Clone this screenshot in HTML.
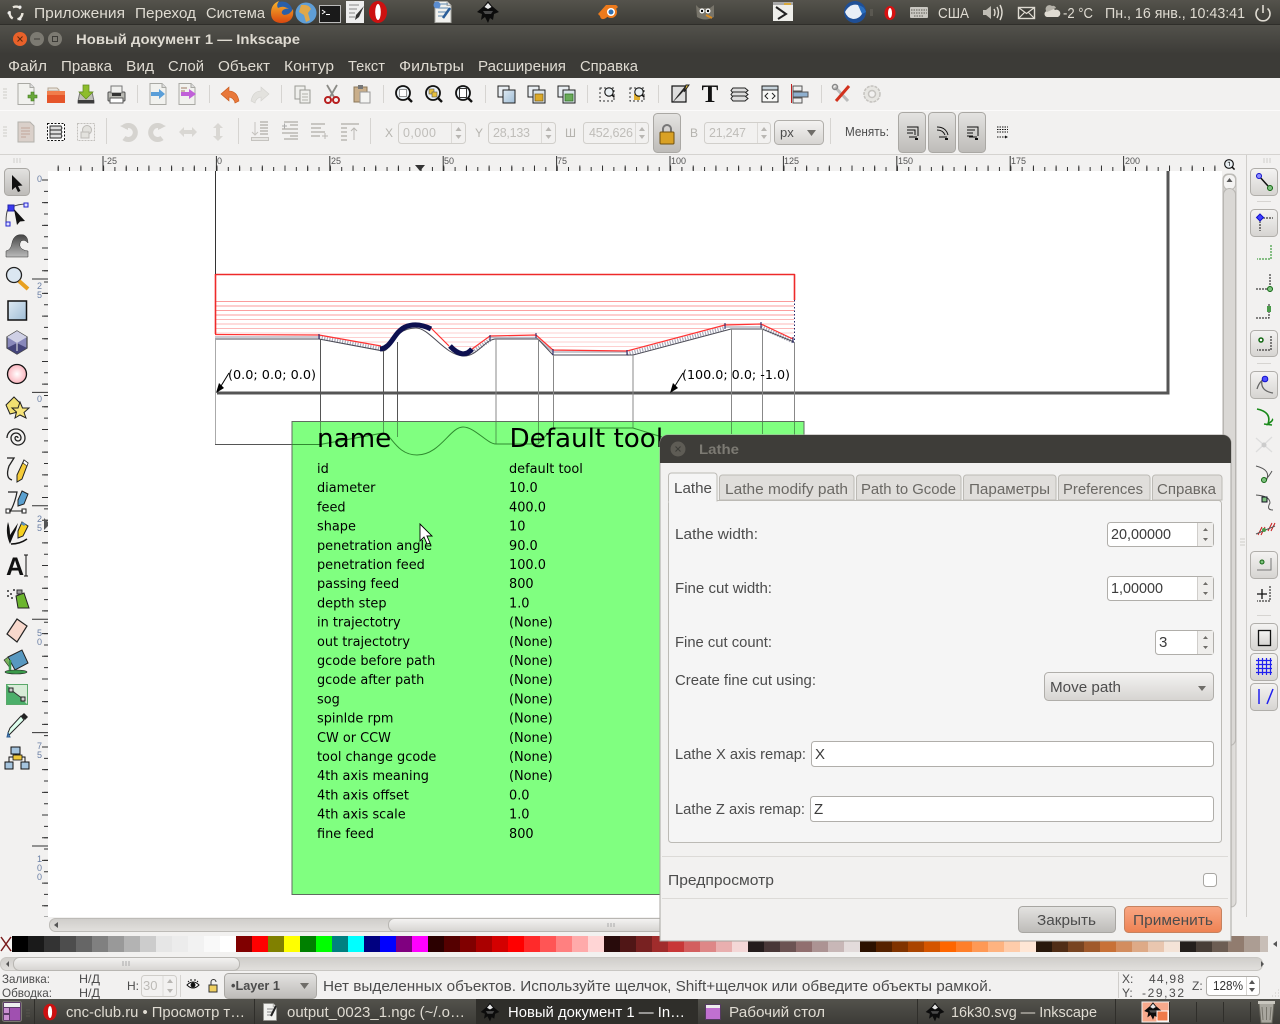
<!DOCTYPE html>
<html lang="ru"><head><meta charset="utf-8"><title>Новый документ 1 — Inkscape</title>
<style>
html,body{margin:0;padding:0;background:#f2f1f0;width:1280px;height:1024px;overflow:hidden}
svg{display:block}
.u{font-family:"Liberation Sans","DejaVu Sans",sans-serif;font-size:15px}
.p{fill:#dfdbd2}
.d{fill:#4c4c4c}
.c{font-family:"DejaVu Sans",sans-serif;font-size:12.900px;fill:#000}
.r{font-family:"Liberation Sans",sans-serif;font-size:9px;fill:#555}
.v{font-family:"Liberation Sans",sans-serif;font-size:9px;fill:#6a7fa5}
.dim{fill:#b5b3ae}
</style></head><body>
<svg width="1280" height="1024" viewBox="0 0 1280 1024" xmlns="http://www.w3.org/2000/svg">
<defs>
<linearGradient id="pan" x1="0" y1="0" x2="0" y2="1"><stop offset="0" stop-color="#55534c"/><stop offset="1" stop-color="#3d3c37"/></linearGradient>
<linearGradient id="tit" x1="0" y1="0" x2="0" y2="1"><stop offset="0" stop-color="#53524c"/><stop offset="1" stop-color="#3c3b37"/></linearGradient>
<linearGradient id="btn" x1="0" y1="0" x2="0" y2="1"><stop offset="0" stop-color="#f4f3f2"/><stop offset="1" stop-color="#d6d4d1"/></linearGradient>
<linearGradient id="btn2" x1="0" y1="0" x2="0" y2="1"><stop offset="0" stop-color="#e4e3e1"/><stop offset="1" stop-color="#bdbbb8"/></linearGradient>
<linearGradient id="org" x1="0" y1="0" x2="0" y2="1"><stop offset="0" stop-color="#f9a784"/><stop offset="1" stop-color="#ee8253"/></linearGradient>
<linearGradient id="blu" x1="0" y1="0" x2="1" y2="1"><stop offset="0" stop-color="#dfeaf3"/><stop offset="1" stop-color="#9fbdd6"/></linearGradient>
<linearGradient id="trk" x1="0" y1="0" x2="0" y2="1"><stop offset="0" stop-color="#cfcdca"/><stop offset="1" stop-color="#e2e0dd"/></linearGradient>
<linearGradient id="trv" x1="0" y1="0" x2="1" y2="0"><stop offset="0" stop-color="#cfcdca"/><stop offset="1" stop-color="#e2e0dd"/></linearGradient>
<linearGradient id="wav" x1="0" y1="0" x2="0" y2="1"><stop offset="0" stop-color="#444"/><stop offset="1" stop-color="#bbb"/></linearGradient>
<linearGradient id="fx" x1="0" y1="0" x2="0" y2="1"><stop offset="0" stop-color="#f7b52c"/><stop offset="1" stop-color="#d9480f"/></linearGradient>
<radialGradient id="pk"><stop offset="0" stop-color="#fff"/><stop offset="1" stop-color="#fbb4bd"/></radialGradient>
<g id="ink"><path d="M0-11 L4-6 L11 0 L6 2 L5 8 L2 6 L0 11 L-3 5 L-7 8 L-6 2 L-11 0 L-4-6Z" fill="#0c0c0c"/><path d="M0-9 L3.500-5 L0-3 L-3.500-5Z" fill="#e6e6e6"/><path d="M-5-1 L5-1 L3 2 L-3 2Z" fill="#4a4a4a"/></g>
<g id="opera"><ellipse cx="0" cy="0" rx="9" ry="11" fill="#cc1111"/><ellipse cx="0" cy="0" rx="2.800" ry="8" fill="#fff"/></g>
<g id="page"><path d="M-8-10.500 H4 L8-6.500 V10.500 H-8Z" fill="#f1f1ee" stroke="#a9a9a4"/><path d="M4-10.500 V-6.500 H8" fill="#ddd" stroke="#a9a9a4"/></g>
<g id="mag"><line x1="4" y1="4" x2="9" y2="9" stroke="#111" stroke-width="2.400"/><circle r="7" fill="#eaf0f4" stroke="#111" stroke-width="1.800"/></g>
</defs>

<!-- TOP PANEL -->
<rect width="1280" height="24" fill="url(#pan)"/>
<g fill="none" stroke="#e8e4da" stroke-width="2.400"><circle cx="16" cy="13" r="6.400" stroke-dasharray="8.500 4.900"/></g>
<circle cx="9" cy="13" r="1.500" fill="#eee"/><circle cx="20" cy="7" r="1.500" fill="#eee"/><circle cx="20" cy="19" r="1.500" fill="#eee"/>
<g class="u p">
<text x="34" y="18" textLength="91" lengthAdjust="spacingAndGlyphs">Приложения</text>
<text x="135" y="18" textLength="61" lengthAdjust="spacingAndGlyphs">Переход</text>
<text x="206" y="18" textLength="59" lengthAdjust="spacingAndGlyphs">Система</text>
<text x="938" y="18" textLength="31" lengthAdjust="spacingAndGlyphs">США</text>
<text x="1063" y="18" textLength="30" lengthAdjust="spacingAndGlyphs">-2 °C</text>
<text x="1105" y="18" textLength="140" lengthAdjust="spacingAndGlyphs">Пн., 16 янв., 10:43:41</text>
</g>
<!-- firefox -->
<circle cx="282" cy="12" r="10.500" fill="#2a5fa8"/><path d="M271 13 Q271 4 279 1 Q276 5 278 8 Q283 5 289 9 Q286 8 283 10 Q280 13 284 15 Q290 15 293 9 Q295 22 282 23 Q271 23 271 13Z" fill="url(#fx)"/>
<!-- globe -->
<circle cx="306" cy="13" r="10.500" fill="#5f9ed6"/><path d="M301 5 Q309 4 311 9 L308 13 L310 20 L306 22 L304 15 L299 12Z" fill="#e0a84a"/>
<!-- terminal -->
<rect x="319.500" y="5.500" width="21" height="17" fill="#1a1a1a" stroke="#bbb"/><path d="M322 10 l3 2-3 2" fill="none" stroke="#fff"/><line x1="326" y1="14.500" x2="330" y2="14.500" stroke="#fff"/>
<!-- notepad -->
<rect x="346" y="1" width="18" height="22" fill="#eee"/><path d="M349 5h10M349 9h8M349 13h6M349 17h6" stroke="#888"/><path d="M364 6 L359 17 L355 20 L356 15Z" fill="#333"/>
<use href="#opera" x="378" y="12"/>
<!-- doc -->
<use href="#page" x="443" y="12"/><path d="M438 4h10M438 8h10M438 12h9M438 16h6" stroke="#5b86ad"/><path d="M450 8l-7 10" stroke="#2b5e99" stroke-width="2.500"/><circle cx="437" cy="5" r="3.500" fill="#5b8dd0"/>
<use href="#ink" x="488" y="12"/>
<!-- blender -->
<path d="M598 14 L606 5 L616 5 Q619 7 617 8 L606 18 Q601 21 600 16Z" fill="#ec7a1c"/><circle cx="611" cy="12" r="6" fill="#ec7a1c"/><circle cx="611" cy="12" r="4" fill="#fff"/><circle cx="611" cy="12" r="2.500" fill="#2f6fb0"/>
<!-- gimp -->
<path d="M696 5 L699 8 H710 L714 5 L714 17 Q705 22 697 17Z" fill="#77746a"/><circle cx="702" cy="11" r="2.500" fill="#fff"/><circle cx="708" cy="11" r="2.500" fill="#fff"/><circle cx="702" cy="11" r="1.200"/><circle cx="708" cy="11" r="1.200"/><path d="M706 15l6 3" stroke="#d98a20" stroke-width="2"/>
<!-- file -->
<rect x="773" y="2" width="20" height="19" fill="#eeeeea"/><rect x="773" y="2" width="20" height="3" fill="#aaa"/><rect x="784" y="3" width="7" height="2" fill="#d8a83a"/><path d="M776 7 L786 14 L778 19" fill="none" stroke="#222" stroke-width="2"/>
<!-- thunderbird -->
<circle cx="855" cy="12" r="11" fill="#1f4f96"/><path d="M845 12 Q850 3 858 5 L863 12 Q860 19 853 19 Q847 18 845 12Z" fill="#e8eef6"/><path d="M858 5 Q864 6 866 12 L862 14Z" fill="#2a6fc0"/>
<rect x="870" y="9" width="3" height="7" fill="#5a5851"/>
<ellipse cx="890" cy="13" rx="5.500" ry="7" fill="#d61111"/><ellipse cx="890" cy="13" rx="2" ry="5" fill="#fff"/>
<rect x="910" y="7" width="18" height="11" rx="1" fill="#c9c7c1"/><g stroke="#5a5851" stroke-width="1" stroke-dasharray="1.500 1"><line x1="911" y1="10" x2="927" y2="10"/><line x1="911" y1="13" x2="927" y2="13"/><line x1="914" y1="16" x2="924" y2="16"/></g>
<path d="M983 10h3l5-4v13l-5-4h-3Z" fill="#bfbcb4"/><g fill="none" stroke="#dfdbd2" stroke-width="1.400"><path d="M994 9q2 3.500 0 7"/><path d="M997 7q3 5.500 0 11"/><path d="M1000 5q4 7.500 0 15"/></g>
<rect x="1018.500" y="7.500" width="16" height="11" fill="#3f3e39" stroke="#dfdbd2" stroke-width="1.400"/><path d="M1018.500 7.500l8 6 8-6M1018.500 18.500l6-6M1034.500 18.500l-6-6" fill="none" stroke="#dfdbd2" stroke-width="1.200"/>
<path d="M1047 17a3 3 0 0 1 1-6a4 4 0 0 1 7-1a3.500 3.500 0 0 1 3 7Z" fill="#dfdbd2"/><path d="M1047 12a3 3 0 0 1 5-6a3 3 0 0 1 4 2" fill="#b5b2a9"/>
<g fill="none" stroke="#dfdbd2" stroke-width="1.600"><path d="M1258.500 8.500a7 7 0 1 0 9 0"/><line x1="1263" y1="5" x2="1263" y2="13"/></g>

<!-- TITLEBAR + MENU -->
<rect y="24" width="1280" height="30" fill="url(#tit)"/>
<rect y="54" width="1280" height="24" fill="#3c3b37"/>
<line x1="0" y1="24.500" x2="1280" y2="24.500" stroke="#2f2e2a"/>
<circle cx="20" cy="39" r="7" fill="#e9612a"/><path d="M17.500 36.500l5 5m0-5l-5 5" stroke="#5a2a10"/>
<circle cx="37" cy="39" r="7" fill="#7c7a72"/><line x1="34" y1="39" x2="40" y2="39" stroke="#3c3b37"/>
<circle cx="55" cy="39" r="7" fill="#7c7a72"/><rect x="52.500" y="36.500" width="5" height="5" fill="none" stroke="#3c3b37"/>
<text x="76" y="44" class="u" style="font-weight:bold;font-size:14px" fill="#dfdbd2" textLength="224" lengthAdjust="spacingAndGlyphs">Новый документ 1 — Inkscape</text>
<g class="u p">
<text x="8" y="71" textLength="39" lengthAdjust="spacingAndGlyphs">Файл</text>
<text x="61" y="71" textLength="51" lengthAdjust="spacingAndGlyphs">Правка</text>
<text x="126" y="71" textLength="28" lengthAdjust="spacingAndGlyphs">Вид</text>
<text x="168" y="71" textLength="36" lengthAdjust="spacingAndGlyphs">Слой</text>
<text x="218" y="71" textLength="52" lengthAdjust="spacingAndGlyphs">Объект</text>
<text x="284" y="71" textLength="50" lengthAdjust="spacingAndGlyphs">Контур</text>
<text x="348" y="71" textLength="37" lengthAdjust="spacingAndGlyphs">Текст</text>
<text x="399" y="71" textLength="65" lengthAdjust="spacingAndGlyphs">Фильтры</text>
<text x="478" y="71" textLength="88" lengthAdjust="spacingAndGlyphs">Расширения</text>
<text x="580" y="71" textLength="58" lengthAdjust="spacingAndGlyphs">Справка</text>
</g>

<!-- TOOLBARS -->
<rect y="78" width="1280" height="77" fill="#f2f1f0"/>
<line x1="0" y1="110.500" x2="1280" y2="110.500" stroke="#fbfafa"/>
<line x1="0" y1="154.500" x2="1280" y2="154.500" stroke="#d5d3d0"/>
<g stroke="#cfcdc9"><path d="M3 89h4M3 92h4M3 95h4M3 98h4M3 127h4M3 130h4M3 133h4M3 136h4"/></g>
<g stroke="#d6d4d1"><path d="M137.500 85v18M209.500 85v18M281.500 85v18M383.500 85v18M485.500 85v18M587.500 85v18M658.500 85v18M821.500 85v18M106.500 118v26M238.500 118v26M370.500 118v26M830.500 118v26"/></g>
<!-- row 1 icons -->
<use href="#page" x="26" y="94"/><path d="M31 92h3v3h3v3h-3v3h-3v-3h-3v-3h3Z" fill="#6aa83a" stroke="#3f7a1e" stroke-width=".6"/>
<path d="M48 88h9l2 2v1H48Z" fill="#e9e5df" stroke="#b5a795"/><rect x="47" y="91" width="18" height="12" fill="#e5552a"/><rect x="47" y="91" width="18" height="4" fill="#f17d4b"/>
<path d="M78 101 L80 92 H92 L94 101 V103 H78Z" fill="#bfbfb8" stroke="#777"/><rect x="78" y="100" width="16" height="3.500" fill="#3c3c3c"/><path d="M83 85h6v7h4l-7 7-7-7h4Z" fill="#8ebd2c" stroke="#5f8a1b" stroke-width=".7"/>
<rect x="108" y="92" width="17" height="9" rx="1" fill="#b9b9b3" stroke="#4f4f4f"/><rect x="111" y="86" width="11" height="7" fill="#f0f0ee" stroke="#777"/><rect x="110" y="98" width="13" height="5" fill="#fff" stroke="#555"/><rect x="112" y="93" width="9" height="3" fill="#333"/>
<use href="#page" x="158" y="94"/><path d="M151 92h8v-3l6 5-6 5v-3h-8Z" fill="#5a9ed8"/>
<use href="#page" x="187" y="94"/><path d="M181 88h6M181 91h4" stroke="#c8b5a8" stroke-width="2"/><path d="M181 92h8v-3l7 5-7 5v-3h-8Z" fill="#c060d8"/>
<path d="M221 94 L229 87 V91 Q237 91 239 101 L235 103 Q234 98 229 97 V101Z" fill="#e8783a" stroke="#c55618" stroke-width=".6"/>
<path d="M269 94 L261 87 V91 Q253 91 251 101 L255 103 Q256 98 261 97 V101Z" fill="#e3e2de" stroke="#d2d1cd" stroke-width=".6"/>
<rect x="295" y="86" width="10" height="13" fill="#efefec" stroke="#9a9a95"/><rect x="300" y="90" width="10" height="13" fill="#efefec" stroke="#9a9a95"/><path d="M302 94h6M302 97h6M302 100h6" stroke="#b0b0aa"/>
<path d="M327 85l7 12M337 85l-7 12" stroke="#8b8b86" stroke-width="1.800"/><circle cx="328" cy="100" r="3" fill="none" stroke="#b81f1f" stroke-width="2"/><circle cx="336" cy="100" r="3" fill="none" stroke="#b81f1f" stroke-width="2"/>
<rect x="354" y="87" width="13" height="15" fill="#c9ae8a" stroke="#8a7658"/><rect x="358" y="85" width="5" height="4" fill="#777"/><rect x="360" y="92" width="10" height="11" fill="#f4f4f2" stroke="#999"/>
<g transform="translate(403,93)"><use href="#mag"/><rect x="-3.500" y="-3.500" width="7" height="7" fill="#fff" stroke="#333" stroke-dasharray="1 1"/></g>
<g transform="translate(433,93)"><use href="#mag"/><rect x="-4" y="-4" width="5" height="5" fill="#e8c03a" stroke="#555" stroke-width=".6"/><rect x="-1" y="-1" width="5" height="5" fill="#e8c03a" stroke="#555" stroke-width=".6"/></g>
<g transform="translate(463,93)"><use href="#mag"/><rect x="-3.500" y="-4.500" width="7" height="9" fill="#fff" stroke="#333"/></g>
<rect x="498" y="86" width="11" height="11" fill="#e9eef3" stroke="#222"/><rect x="503" y="90" width="12" height="13" fill="url(#blu)" stroke="#222"/>
<rect x="528" y="86" width="11" height="11" fill="#e9eef3" stroke="#222"/><rect x="533" y="90" width="12" height="13" fill="#d8e2ea" stroke="#222"/><rect x="535" y="94" width="8" height="7" fill="#dcaa2a" stroke="#7a5a10" stroke-width=".7"/>
<rect x="558" y="86" width="11" height="11" fill="#e9eef3" stroke="#222"/><rect x="563" y="90" width="12" height="13" fill="#d8e2ea" stroke="#222"/><rect x="565" y="94" width="8" height="7" fill="#6aaa5a" stroke="#2a6a1a" stroke-width=".7"/>
<rect x="600" y="88" width="14" height="13" fill="none" stroke="#333" stroke-dasharray="2 2"/><g transform="translate(609,92) scale(.6)"><use href="#mag"/></g>
<rect x="630" y="88" width="14" height="13" fill="none" stroke="#333" stroke-dasharray="2 2"/><rect x="634" y="94" width="6" height="6" fill="#e0b030"/><g transform="translate(639,92) scale(.6)"><use href="#mag"/></g>
<rect x="672" y="86" width="14" height="16" fill="#ddd" stroke="#111" stroke-width="1.200"/><path d="M689 85 L680 95 L672 103 L678 95 L686 85Z" fill="#222"/><path d="M689 85 L684 92 L686 85Z" fill="#e8c03a" stroke="#222"/>
<text x="710" y="102" text-anchor="middle" style="font-family:'Liberation Serif',serif;font-weight:bold;font-size:25px" fill="#111">T</text>
<g fill="#ddd" stroke="#222"><path d="M733 88h12l3 2.500-3 2.500h-12l-2-2.500Z"/><path d="M733 92h12l3 2.500-3 2.500h-12l-2-2.500Z"/><path d="M733 96h12l3 2.500-3 2.500h-12l-2-2.500Z"/></g>
<rect x="762" y="86" width="16" height="16" fill="#f8f8f6" stroke="#222"/><rect x="762" y="86" width="16" height="4" fill="#c8d4dc" stroke="#222"/><path d="M768 93l-3 3 3 3M772 93l3 3-3 3" fill="none" stroke="#222"/>
<line x1="791.500" y1="84" x2="791.500" y2="103" stroke="#c02020"/><rect x="793" y="86" width="9" height="5" fill="#eee" stroke="#555"/><rect x="793" y="92" width="15" height="5" fill="#8fb0cf" stroke="#555"/><rect x="793" y="98" width="9" height="5" fill="#eee" stroke="#555"/>
<path d="M835 87 L848 101" stroke="#bbb" stroke-width="3"/><path d="M849 86 L836 101" stroke="#d2311d" stroke-width="3"/><circle cx="835" cy="87" r="2.500" fill="none" stroke="#888" stroke-width="1.500"/>
<circle cx="872" cy="94" r="8" fill="#e7e6e2" stroke="#c5c3bf" stroke-width="1.500" stroke-dasharray="3 1"/><circle cx="872" cy="94" r="3.500" fill="#f2f1f0" stroke="#c5c3bf" stroke-width="1.500"/>

<!-- row 2 icons -->
<g opacity=".85"><path d="M18 122 H30 L34 126 V142 H18Z" fill="#d6cbc4" stroke="#a9a6a0"/><path d="M21 128h9M21 131h9M21 134h9M21 137h5" stroke="#b99a8b"/></g>
<rect x="47.500" y="123.500" width="17" height="17" fill="#fff" stroke="#111" stroke-dasharray="2 1.500"/><g fill="#ddd" stroke="#222" stroke-width=".9"><path d="M50 126h11l1 2-1 2H50Z"/><path d="M50 130h11l1 2-1 2H50Z"/><path d="M50 134h11l1 2-1 2H50Z"/></g>
<rect x="77.500" y="123.500" width="17" height="17" fill="none" stroke="#c2c0bc" stroke-dasharray="2 1"/><circle cx="87" cy="130" r="4.500" fill="#e3e2de" stroke="#bdbbb7"/><rect x="81" y="132" width="8" height="6" fill="#e3e2de" stroke="#bdbbb7"/>
<g fill="none" stroke="#d5d3cf" stroke-width="5"><path d="M124 127 A7 7 0 1 1 124 138"/><path d="M162 127 A7 7 0 1 0 162 138"/></g><path d="M120 126l8-3v7Z" fill="#d5d3cf"/><path d="M166 126l-8-3v7Z" fill="#d5d3cf"/>
<path d="M179 132l5-5v3h8v-3l5 5-5 5v-3h-8v3Z" fill="#d9d7d3"/><path d="M218 123l5 5h-3v8h3l-5 5-5-5h3v-8h-3Z" fill="#d9d7d3"/>
<g stroke="#c5c3bf"><rect x="251.500" y="137.500" width="17" height="3" fill="#e6e5e2"/><path d="M255 122v13M252 132l3 3 3-3" fill="none"/><path d="M260 122h8M260 125h8M260 128h8M260 131h8M260 134h8" stroke-width="1.600" stroke="#b9b7b3"/></g>
<g stroke="#b9b7b3" stroke-width="1.600"><path d="M284 122h14M290 125h8M282 129h16M282 133h16M290 136h8M284 139h14"/></g><path d="M282 126h5M284.500 123.500v5" stroke="#aaa"/>
<g stroke="#b9b7b3" stroke-width="1.600"><path d="M311 124h14M311 128h10M311 132h14M311 136h9"/><path d="M322 136h6M325 133v6" stroke-width="1"/></g>
<g stroke="#b9b7b3" stroke-width="1.600"><path d="M341 124h18M341 128h6M341 132h6M341 136h6M341 140h6"/><path d="M354 140v-12M351 131l3-3 3 3" fill="none" stroke-width="1"/></g>

<g style="font-family:'Liberation Sans',sans-serif;font-size:12px" fill="#b5b3ae"><text x="385" y="137">X</text><text x="475" y="137">Y</text><text x="565" y="137">Ш</text><text x="690" y="137">В</text></g>
<g fill="#f2f1f0" stroke="#d1cfcb"><rect x="398.500" y="122.500" width="67" height="21" rx="3"/><rect x="488.500" y="122.500" width="67" height="21" rx="3"/><rect x="583.500" y="122.500" width="65" height="21" rx="3"/><rect x="704.500" y="122.500" width="66" height="21" rx="3"/></g>
<path d="M451.500 123v20M541.500 123v20M635.500 123v20M757.500 123v20" stroke="#dcdad7"/>
<g fill="#b9b7b3"><path d="M458.500 127l-3 4h6ZM458.500 139l-3-4h6ZM548.500 127l-3 4h6ZM548.500 139l-3-4h6ZM642 127l-3 4h6ZM642 139l-3-4h6ZM764 127l-3 4h6ZM764 139l-3-4h6Z"/></g>
<g style="font-family:'Liberation Sans',sans-serif;font-size:12.500px" fill="#bfbdb9"><text x="403" y="137" textLength="33">0,000</text><text x="493" y="137" textLength="37">28,133</text><text x="589" y="137" textLength="44">452,626</text><text x="709" y="137" textLength="37">21,247</text></g>
<rect x="653.500" y="113.500" width="27" height="39" rx="4" fill="url(#btn2)" stroke="#aaa8a4"/>
<path d="M663 132v-3a4 4 0 0 1 8 0v3" fill="none" stroke="#777" stroke-width="2"/><rect x="660" y="132" width="14" height="12" rx="1" fill="#d9a125" stroke="#70500e"/>
<rect x="774.500" y="120.500" width="49" height="24" rx="4" fill="url(#btn)" stroke="#b0aeaa"/><text x="780" y="137" style="font-family:'Liberation Sans',sans-serif;font-size:13px" fill="#4c4c4c">px</text><path d="M807 130h9l-4.500 6Z" fill="#6f6d69"/>
<text x="845" y="136" class="u" style="font-size:12.500px" fill="#4c4c4c" textLength="44" lengthAdjust="spacingAndGlyphs">Менять:</text>
<g fill="url(#btn2)" stroke="#aaa8a4"><rect x="898.500" y="112.500" width="27" height="40" rx="4"/><rect x="928.500" y="112.500" width="27" height="40" rx="4"/><rect x="958.500" y="112.500" width="27" height="40" rx="4"/></g>
<g fill="none" stroke="#111"><path d="M907 127h11v9M907 130h8v5M907 133h6"/><path d="M909 137h8M937 127q9 0 11 8M937 130q6 0 8 5M967 127h11v9M967 130h8M967 133h6M967 136h6M969 137h8M939 137h8"/></g><path d="M915 138h3v2h-3ZM945 138h3v2h-3ZM975 138h3v2h-3Z" fill="#111"/>
<g stroke="#111" stroke-dasharray="1.500 1"><path d="M997 127h11M997 129.500h11M997 132h11M997 137h9"/></g><path d="M1005 135.500l3 1.500-3 1.500" fill="#111"/>

<!-- RULER -->
<rect y="155" width="1280" height="16" fill="#f2f1f0"/>
<rect y="171" width="48" height="760" fill="#f2f1f0"/>
<rect x="1222" y="171" width="58" height="760" fill="#f2f1f0"/>
<g stroke="#333" stroke-width="1"><path d="M48 169 H1222" stroke-width="4" stroke-dasharray="1 10.340" stroke-dashoffset="-9.700"/><path d="M48 168 H1222" stroke-width="5" stroke-dasharray="1 21.680" stroke-dashoffset="-9.700"/><path d="M48 163.500 H1222" stroke-width="15" stroke-dasharray="1 112.400" stroke-dashoffset="-54.500" /></g>
<g class="r"><text x="104" y="164">-25</text><text x="217" y="164">0</text><text x="331" y="164">25</text><text x="444" y="164">50</text><text x="557" y="164">75</text><text x="671" y="164">100</text><text x="784" y="164">125</text><text x="898" y="164">150</text><text x="1011" y="164">175</text><text x="1125" y="164">200</text></g>
<path d="M415 165h10l-5 6Z" fill="#333"/>
<g stroke="#d0cecb"><path d="M14 158v5M17 158v5M20 158v5M1264 158v5M1267 158v5M1270 158v5"/></g>
<g transform="translate(1229,164) scale(.62)"><use href="#mag"/><path d="M-2-3h3v6" stroke="#111" fill="none"/></g>
<g stroke="#333"><path d="M48 171 V917" transform="translate(-2,0)" stroke-width="4" stroke-dasharray="1 10.340" stroke-dashoffset="-8.500"/><path d="M48 171 V917" transform="translate(-3,0)" stroke-width="6" stroke-dasharray="1 21.680" stroke-dashoffset="-8.500"/><path d="M40 171 V917" stroke-width="16" stroke-dasharray="1 112.400" stroke-dashoffset="-107.500"/></g>
<g class="v"><text x="37" y="182">0</text><text x="37" y="289">2</text><text x="37" y="298">5</text><text x="37" y="402">0</text><text x="37" y="522">2</text><text x="37" y="531">5</text><text x="37" y="636">5</text><text x="37" y="645">0</text><text x="37" y="749">7</text><text x="37" y="758">5</text><text x="37" y="862">1</text><text x="37" y="871">0</text><text x="37" y="880">0</text></g>
<path d="M44 518l6 6-6 6Z" fill="#555"/>

<!-- CANVAS -->
<rect x="48" y="171" width="1174" height="746" fill="#fff"/>
<g stroke="#fa9c9c"><path d="M215 301.500H794M215 306H794"/></g><g stroke="#fb9e9e"><path d="M215 310.500H794M215 315H794"/></g><g stroke="#fcb8b8"><path d="M215 319.500H794M215 324H794M215 328.500H794"/></g><g stroke="#fdd0d0"><path d="M215 333H794M319 337.500H794M335 342H794M355 346.500H794M540 351H640"/></g>
<path d="M215 335 L319 336 L381 347 C391 346 394 331 410 325 Q420 323 430 328 L449 347 Q463 357 472 350 L490 337 L536 336 L553 351 L627 352 L725 326 L761 325 L794 340 V420 H215Z" fill="#fff"/>
<g fill="none" stroke-linejoin="round">
<path d="M319 337.500 L381 349 M472 352 L490 340 M627 354 L725 328 M761 327 L794 342" stroke="#a8a8b8" stroke-width="4" stroke-dasharray="1.200 1.400"/>
<path d="M215 337 H319 M490 337.500 H536 L553 352 H627 M725 327 H761" stroke="#b8b8c4" stroke-width="1.500"/>
<path d="M215 339 L319 339 L383 351 C392 350 393 328 416 328 C430 328 445 356 464 356 C478 356 485 339 496 339 L538 339 L553 355 L633 355 L731 329 L762 329 L794 342" stroke="#4a4a55" stroke-width="1"/>
<path d="M215 334.500 L319 335 L381 346 M430 327 L449 346 M472 349 L490 336 L536 335 L553 350 L627 351 L725 325 L761 324 L793 339" stroke="#f33" stroke-width="1.200"/>
<path d="M215 274.500 H794.500 V300 M215.500 274 V334" stroke="#ee2a2a" stroke-width="1.600"/>
<path d="M380 349 C392 348 393 333 405 327 Q417 322 431 329" stroke="#0d1050" stroke-width="5"/>
<path d="M450 346 Q463 360 472 349" stroke="#0d1050" stroke-width="5"/>
<path d="M794.500 300 V342" stroke="#222266" stroke-dasharray="1.500 2"/>
<path d="M319 334v5M490 335v5M536 333v5M553 349v6M627 350v5M725 323v6M761 322v6M793 337v6" stroke="#1a1a60" stroke-width="1"/>
</g>
<line x1="215.500" y1="171" x2="215.500" y2="274" stroke="#333"/>
<path d="M1168 171 V393 H217" fill="none" stroke="#555" stroke-width="3"/>
<g stroke="#555" fill="none"><path d="M320.500 339V444M383.500 351V444M397.500 342V444"/></g>
<g stroke="#888"><path d="M496 339V444M538.500 339V444M553.500 355V428M633 355V428M731.500 329V444M762.500 329V444M794.500 342V444"/></g>
<path d="M215.500 340V444" stroke="#aaa"/>
<path d="M215 444.500H292" stroke="#555"/>
<text x="228" y="379" class="c" style="font-size:12.800px" textLength="88" lengthAdjust="spacingAndGlyphs">(0.0; 0.0; 0.0)</text>
<text x="682" y="379" class="c" style="font-size:12.800px" textLength="108" lengthAdjust="spacingAndGlyphs">(100.0; 0.0; -1.0)</text>
<path d="M229 373 L221 386" stroke="#000"/><path d="M216 393 L224 388 L219 383Z" fill="#000"/>
<path d="M683 373 L675 386" stroke="#000"/><path d="M670 393 L678 388 L673 383Z" fill="#000"/>
<rect x="292" y="421.500" width="512" height="473" fill="#80ff80" stroke="#5f6b5f"/>
<g stroke="#4f9f4f" fill="none"><path d="M320.500 422V444M383.500 422V433M397.500 422V437M496 422V444M538.500 422V444M553.500 422V428M633 422V428M731.500 422V434M762.500 422V434M794.500 422V894"/></g>
<path d="M292 444.500H320 L383 433 C391 433 396 455 417 455 C440 455 450 427 463 427 C475 427 487 444 496 444 H538 L553 428 H633 L662 437" fill="none" stroke="#2f8a2f"/>
<text x="317" y="447" class="c" style="font-size:26.200px">name</text>
<text x="509.500" y="447" class="c" style="font-size:26.200px">Default tool</text>
<g class="c">
<text x="317" y="473">id</text><text x="509" y="473">default tool</text>
<text x="317" y="492.200">diameter</text><text x="509" y="492.200">10.0</text>
<text x="317" y="511.400">feed</text><text x="509" y="511.400">400.0</text>
<text x="317" y="530.600">shape</text><text x="509" y="530.600">10</text>
<text x="317" y="549.800">penetration angle</text><text x="509" y="549.800">90.0</text>
<text x="317" y="569">penetration feed</text><text x="509" y="569">100.0</text>
<text x="317" y="588.200">passing feed</text><text x="509" y="588.200">800</text>
<text x="317" y="607.400">depth step</text><text x="509" y="607.400">1.0</text>
<text x="317" y="626.600">in trajectotry</text><text x="509" y="626.600">(None)</text>
<text x="317" y="645.800">out trajectotry</text><text x="509" y="645.800">(None)</text>
<text x="317" y="665">gcode before path</text><text x="509" y="665">(None)</text>
<text x="317" y="684.200">gcode after path</text><text x="509" y="684.200">(None)</text>
<text x="317" y="703.400">sog</text><text x="509" y="703.400">(None)</text>
<text x="317" y="722.600">spinlde rpm</text><text x="509" y="722.600">(None)</text>
<text x="317" y="741.800">CW or CCW</text><text x="509" y="741.800">(None)</text>
<text x="317" y="761">tool change gcode</text><text x="509" y="761">(None)</text>
<text x="317" y="780.200">4th axis meaning</text><text x="509" y="780.200">(None)</text>
<text x="317" y="799.400">4th axis offset</text><text x="509" y="799.400">0.0</text>
<text x="317" y="818.600">4th axis scale</text><text x="509" y="818.600">1.0</text>
<text x="317" y="837.800">fine feed</text><text x="509" y="837.800">800</text>
</g>
<path d="M420 524 V541 L424 537 L427 544 L430 543 L427 536 L432 536Z" fill="#fff" stroke="#000" stroke-width=".9"/>

<!-- TOOL COLUMN -->
<rect x="4.500" y="168.500" width="25" height="27" rx="4" fill="url(#btn2)" stroke="#aaa8a4"/>
<path d="M12 175 L12 190 L15.500 187 L18 192 L20.500 191 L18 186 L22.500 185.500Z" fill="#111"/>
<path d="M12 207 Q18 204 27 204 M8 209 q-2 4-2 13" fill="none" stroke="#444"/><rect x="8" y="205" width="6" height="6" fill="#3a3af0" stroke="#2222aa"/><rect x="6" y="222" width="4" height="4" fill="#dfe0ff" stroke="#2222cc"/><rect x="24" y="203" width="4" height="4" fill="#dfe0ff" stroke="#2222cc"/><path d="M14 209 L25 221 L20 221.500 L17 225Z" fill="#111"/>
<path d="M6 257 V251 Q11 250 12 243 Q14 233 24 235 Q28 237 28 243 Q25 239 21 241 Q18 246 22 249 Q25 251 28 251 V257Z" fill="url(#wav)" stroke="#333" stroke-width=".5"/>
<g transform="translate(14,275)"><circle r="7.500" fill="#dbe7f2" stroke="#222" stroke-width="1.300"/><path d="M5 6 L14 14" stroke="#e8a020" stroke-width="4"/></g>
<rect x="8" y="301" width="18.500" height="19" fill="url(#blu)" stroke="#111" stroke-width="1.500"/>
<path d="M17 331 L27 337 V348 L17 354 L7 348 V337Z" fill="#8888bb" stroke="#444" stroke-width="1.200"/><path d="M7 337 L17 331 L27 337 L17 343Z" fill="#cfd0e5"/><path d="M7 348 L17 343 L27 348 L17 354Z" fill="#44447a"/><path d="M17 343 V351" stroke="#eee"/>
<circle cx="17" cy="374" r="9.500" fill="url(#pk)" stroke="#111" stroke-width="1.300"/>
<path d="M6 405 L14 397 L20 403 L18 412 L10 414Z" fill="#f2e070" stroke="#222"/><path d="M20 402 L22.500 408 L29 408 L24 412.500 L26 418 L20 415 L15 418 L16.500 412 L12 408 L18 408Z" fill="#f7e47a" stroke="#222"/>
<path d="M18 438 a1.500 1.500 0 0 0 -3 0 a3 3 0 0 0 6 0 a5 5 0 0 0 -10 0 a7 7 0 0 0 14 0 a9 9 0 0 0 -18 0" fill="none" stroke="#222" stroke-width="1.300"/>
<path d="M7 458 H14 L9 466 Q5 478 12 480" fill="none" stroke="#222" stroke-width="1.300"/><path d="M24 460 L28 463 L22 479 L17 482 L17 475Z" fill="#f5cc3a" stroke="#222"/><path d="M24 460 L28 463 L27 466 L23 463Z" fill="#fff" stroke="#222" stroke-width=".6"/>
<path d="M8 492 H17 Q15 503 10 512" fill="none" stroke="#222" stroke-width="1.200"/><rect x="6" y="509" width="4" height="4" fill="#fff" stroke="#222"/><rect x="22" y="509" width="4" height="4" fill="#fff" stroke="#222"/><path d="M9 511h14" stroke="#222"/><path d="M22 491 L28 494 L24 504 L18 506 L18 500Z" fill="#5aa0d0" stroke="#222"/>
<path d="M8 522 Q5 533 10 544 Q13 536 16 530 L18 523 Q12 532 10 535 Q10 528 8 522Z" fill="#111"/><path d="M11 544 Q20 544 27 539" fill="none" stroke="#111" stroke-width="1.500"/><path d="M22 522 L28 526 L23 536 L18 538 L18 531Z" fill="#f5d020" stroke="#222"/><path d="M22 522 L26 524 L24 526 L21 524Z" fill="#5a8fc0"/>
<text x="6" y="575" style="font-family:'Liberation Sans',sans-serif;font-weight:bold;font-size:25px" fill="#111">A</text><path d="M24 555h4M26 555v21M24 576h4" stroke="#111"/>
<g fill="#333"><circle cx="8" cy="591" r="1"/><circle cx="11" cy="594" r="1"/><circle cx="14" cy="590" r="1"/><circle cx="8" cy="596" r="1"/><circle cx="12" cy="598" r="1"/></g><path d="M16 596 L24 593 L29 608 L18 608Z" fill="#6cb52e" stroke="#222"/><rect x="17" y="590" width="5" height="4" fill="#999" stroke="#333"/>
<path d="M17 619 L27 626 L17 642 L7 634Z" fill="#f8d8cc" stroke="#222" stroke-width="1.200"/>
<path d="M8 657 L22 650 L28 663 L15 670Z" fill="#5898c0" stroke="#222"/><path d="M8 657 L4 660 L10 668" fill="#7ab05a" stroke="#222" stroke-width=".6"/><ellipse cx="16" cy="672" rx="11" ry="2" fill="#3a9a4a" stroke="#222" stroke-width=".6"/><path d="M10 660 V670" stroke="#3a9a4a" stroke-width="2.500"/>
<rect x="6" y="684" width="21" height="20" fill="#4caf6a"/><path d="M6 684 H27 V704 Z" fill="#d8ecd8"/><rect x="6.500" y="684.500" width="21" height="20" fill="none" stroke="#5aa86a"/><path d="M11 690 L23 699" stroke="#333"/><rect x="9" y="688" width="4" height="4" fill="#ccc" stroke="#222"/><rect x="21" y="697" width="4" height="4" fill="#ccc" stroke="#222"/>
<path d="M24 713 L28 717 L25 720 L21 716Z" fill="#222"/><path d="M21 716 L24 720 L13 731 L9 735 L8 733 L10 728Z" fill="#dfe" stroke="#222"/><path d="M8 733 L7 737 L10 737Z" fill="#5a90c0" stroke="#2a5a90"/>
<rect x="11" y="747" width="9" height="7" fill="#a5c4de" stroke="#111"/><rect x="5" y="762" width="8" height="7" fill="#a5c4de" stroke="#111"/><rect x="21" y="762" width="8" height="7" fill="#a5c4de" stroke="#111"/><rect x="13" y="755" width="9" height="5" fill="#f0c83a" stroke="#111" stroke-width=".8"/><path d="M9 762V757h4M25 762V757h-3M16 754v1" fill="none" stroke="#111"/>

<!-- RIGHT SCROLLBAR + SNAP BAR -->
<rect x="1223" y="174" width="13" height="733" rx="5" fill="url(#trv)" stroke="#bdbbb7"/>
<rect x="1223.500" y="174.500" width="12" height="15" rx="5" fill="#f4f3f2" stroke="#bdbbb7"/><path d="M1229.500 178l3 4h-6Z" fill="#555"/>
<rect x="1223.500" y="188.500" width="12" height="557" rx="6" fill="#dad8d5" stroke="#b8b6b2"/>
<line x1="1246.500" y1="155" x2="1246.500" y2="930" stroke="#d0cecb"/>
<path d="M1240 539h5M1240 542h5M1240 545h5" stroke="#cfcdc9"/>
<g fill="url(#btn)" stroke="#b0aeaa"><rect x="1250.500" y="168.500" width="27" height="27" rx="4"/><rect x="1250.500" y="209.500" width="27" height="27" rx="4"/><rect x="1250.500" y="330.500" width="27" height="26" rx="4"/><rect x="1250.500" y="371.500" width="27" height="27" rx="4"/><rect x="1250.500" y="551.500" width="27" height="27" rx="4"/><rect x="1250.500" y="623.500" width="27" height="27" rx="4"/><rect x="1250.500" y="653.500" width="27" height="27" rx="4"/><rect x="1250.500" y="683.500" width="27" height="27" rx="4"/></g>
<path d="M1257 201.500h14M1257 363.500h14M1257 615.500h14" stroke="#d6d4d1"/>
<path d="M1259 176 L1268 186" stroke="#111" stroke-width="1.500"/><circle cx="1259" cy="176" r="2.500" fill="#8c8cff" stroke="#11c"/><circle cx="1270" cy="188" r="2.500" fill="#7fc07f" stroke="#161"/>
<path d="M1260 218v13M1263 218h10" stroke="#111" stroke-dasharray="2 1"/><path d="M1260 214l3.500 3.500-3.500 3.500-3.500-3.500Z" fill="#4040ff" stroke="#11c"/>
<path d="M1271 245v14h-14" fill="none" stroke="#1a8a1a" stroke-dasharray="2 1"/>
<path d="M1270 274v14M1256 289h14" stroke="#111" stroke-dasharray="2 1"/><circle cx="1270" cy="289" r="2.500" fill="#7fc07f" stroke="#161"/>
<path d="M1269 304v8M1256 318h13v-6" fill="none" stroke="#111" stroke-dasharray="2 1"/><rect x="1267" y="306" width="4" height="6" fill="#4a9a4a"/>
<circle cx="1261" cy="340" r="2" fill="#fff" stroke="#161" stroke-width="1.500"/><path d="M1271 336v14h-14" fill="none" stroke="#111" stroke-dasharray="2 1"/>
<path d="M1257 389 Q1260 379 1268 378 M1262 380 Q1260 391 1273 393" fill="none" stroke="#666" stroke-width="1.300"/><circle cx="1265" cy="379" r="2.800" fill="#5050ff" stroke="#11c"/>
<path d="M1257 409 Q1272 412 1268 424 Q1274 420 1272 419M1264 424 L1272 425" fill="none" stroke="#1a8a1a" stroke-width="1.600"/>
<path d="M1256 452 L1272 437M1256 438 L1272 452" stroke="#ddd" stroke-width="1.300"/><circle cx="1264" cy="445" r="2.500" fill="#ccc"/>
<path d="M1256 466 Q1272 470 1266 481 M1272 471 Q1268 478 1264 481" fill="none" stroke="#555"/><circle cx="1264" cy="480" r="2.500" fill="#7fc07f" stroke="#161"/>
<path d="M1256 495 Q1270 496 1270 503 Q1266 510 1273 510" fill="none" stroke="#555"/><rect x="1262" y="497" width="5" height="5" fill="#7fc07f" stroke="#112"/>
<path d="M1258 535l4-8M1261 535l4-8M1268 531l4-8M1271 531l4-8" stroke="#c81818"/><path d="M1256 534 L1275 526" stroke="#555"/><circle cx="1264" cy="530" r="2" fill="#4a9a4a"/>
<circle cx="1262" cy="562" r="2" fill="#7fc07f" stroke="#161"/><path d="M1271 558v12h-14" fill="none" stroke="#777"/>
<path d="M1257 594h10M1262 589v10" stroke="#111" stroke-width="1.300"/><path d="M1270 586v15h-13" fill="none" stroke="#111" stroke-dasharray="2 1"/>
<rect x="1258.500" y="630.500" width="12" height="15" fill="url(#btn)" stroke="#111" stroke-width="1.300"/>
<path d="M1256 660.500h16M1256 664.500h16M1256 668.500h16M1256 672.500h16M1258.500 658v17M1262.500 658v17M1266.500 658v17M1270.500 658v17" stroke="#2020f0" stroke-width="1.200"/>
<path d="M1259 689v15M1273 689l-6 15" stroke="#2020f0" stroke-width="1.500"/>

<!-- BOTTOM -->
<rect y="917" width="1280" height="82" fill="#f2f1f0"/>
<rect x="49.500" y="918.500" width="1180" height="13" rx="6" fill="url(#trk)" stroke="#bdbbb7"/>
<path d="M58 922v6l-4-3Z" fill="#555"/>
<rect x="388.500" y="918.500" width="600" height="13" rx="6" fill="url(#btn)" stroke="#b8b6b2"/>
<path d="M608 923v4M611 923v4M614 923v4" stroke="#aaa"/>
<rect x="0" y="936" width="1280" height="16" fill="#ddd"/>
<g shape-rendering="crispEdges">
<rect x="12" y="936" width="16" height="16" fill="#000"/><rect x="28" y="936" width="16" height="16" fill="#1a1a1a"/><rect x="44" y="936" width="16" height="16" fill="#333"/><rect x="60" y="936" width="16" height="16" fill="#4d4d4d"/><rect x="76" y="936" width="16" height="16" fill="#666"/><rect x="92" y="936" width="16" height="16" fill="#808080"/><rect x="108" y="936" width="16" height="16" fill="#999"/><rect x="124" y="936" width="16" height="16" fill="#b3b3b3"/><rect x="140" y="936" width="16" height="16" fill="#ccc"/><rect x="156" y="936" width="16" height="16" fill="#e6e6e6"/><rect x="172" y="936" width="16" height="16" fill="#ececec"/><rect x="188" y="936" width="16" height="16" fill="#f2f2f2"/><rect x="204" y="936" width="16" height="16" fill="#f9f9f9"/><rect x="220" y="936" width="16" height="16" fill="#fff"/>
<rect x="236" y="936" width="16" height="16" fill="#800000"/><rect x="252" y="936" width="16" height="16" fill="#f00"/><rect x="268" y="936" width="16" height="16" fill="#808000"/><rect x="284" y="936" width="16" height="16" fill="#ff0"/><rect x="300" y="936" width="16" height="16" fill="#008000"/><rect x="316" y="936" width="16" height="16" fill="#0f0"/><rect x="332" y="936" width="16" height="16" fill="#008080"/><rect x="348" y="936" width="16" height="16" fill="#0ff"/><rect x="364" y="936" width="16" height="16" fill="#000080"/><rect x="380" y="936" width="16" height="16" fill="#00f"/><rect x="396" y="936" width="16" height="16" fill="#800080"/><rect x="412" y="936" width="16" height="16" fill="#f0f"/>
<rect x="428" y="936" width="16" height="16" fill="#2b0000"/><rect x="444" y="936" width="16" height="16" fill="#500"/><rect x="460" y="936" width="16" height="16" fill="#800000"/><rect x="476" y="936" width="16" height="16" fill="#a00"/><rect x="492" y="936" width="16" height="16" fill="#d40000"/><rect x="508" y="936" width="16" height="16" fill="#f00"/><rect x="524" y="936" width="16" height="16" fill="#ff2a2a"/><rect x="540" y="936" width="16" height="16" fill="#f55"/><rect x="556" y="936" width="16" height="16" fill="#ff8080"/><rect x="572" y="936" width="16" height="16" fill="#faa"/><rect x="588" y="936" width="16" height="16" fill="#ffd5d5"/>
<rect x="604" y="936" width="16" height="16" fill="#280b0b"/><rect x="620" y="936" width="16" height="16" fill="#501616"/><rect x="636" y="936" width="16" height="16" fill="#782121"/><rect x="652" y="936" width="16" height="16" fill="#a02c2c"/><rect x="668" y="936" width="16" height="16" fill="#c83737"/><rect x="684" y="936" width="16" height="16" fill="#d35f5f"/><rect x="700" y="936" width="16" height="16" fill="#de8787"/><rect x="716" y="936" width="16" height="16" fill="#e9afaf"/><rect x="732" y="936" width="16" height="16" fill="#f4d7d7"/>
<rect x="748" y="936" width="16" height="16" fill="#241c1c"/><rect x="764" y="936" width="16" height="16" fill="#483737"/><rect x="780" y="936" width="16" height="16" fill="#6c5353"/><rect x="796" y="936" width="16" height="16" fill="#916f6f"/><rect x="812" y="936" width="16" height="16" fill="#ac9393"/><rect x="828" y="936" width="16" height="16" fill="#c8b7b7"/><rect x="844" y="936" width="16" height="16" fill="#e3dbdb"/>
<rect x="860" y="936" width="16" height="16" fill="#2b1100"/><rect x="876" y="936" width="16" height="16" fill="#520"/><rect x="892" y="936" width="16" height="16" fill="#803300"/><rect x="908" y="936" width="16" height="16" fill="#a40"/><rect x="924" y="936" width="16" height="16" fill="#d45500"/><rect x="940" y="936" width="16" height="16" fill="#f60"/><rect x="956" y="936" width="16" height="16" fill="#ff7f2a"/><rect x="972" y="936" width="16" height="16" fill="#f95"/><rect x="988" y="936" width="16" height="16" fill="#ffb380"/><rect x="1004" y="936" width="16" height="16" fill="#fca"/><rect x="1020" y="936" width="16" height="16" fill="#ffe6d5"/>
<rect x="1036" y="936" width="16" height="16" fill="#28170b"/><rect x="1052" y="936" width="16" height="16" fill="#502d16"/><rect x="1068" y="936" width="16" height="16" fill="#784421"/><rect x="1084" y="936" width="16" height="16" fill="#a05a2c"/><rect x="1100" y="936" width="16" height="16" fill="#c87137"/><rect x="1116" y="936" width="16" height="16" fill="#d38d5f"/><rect x="1132" y="936" width="16" height="16" fill="#deaa87"/><rect x="1148" y="936" width="16" height="16" fill="#e9c6af"/><rect x="1164" y="936" width="16" height="16" fill="#f4e3d7"/>
<rect x="1180" y="936" width="16" height="16" fill="#241f1c"/><rect x="1196" y="936" width="16" height="16" fill="#483e37"/><rect x="1212" y="936" width="16" height="16" fill="#6c5d53"/><rect x="1228" y="936" width="16" height="16" fill="#917c6f"/><rect x="1244" y="936" width="16" height="16" fill="#ac9d93"/><rect x="1260" y="936" width="8" height="16" fill="#c8beb7"/>
</g>
<rect x="0" y="936" width="12" height="16" fill="#f5f4f3"/>
<rect x="1268" y="936" width="12" height="16" fill="#f2f1f0"/><path d="M1277 941v6l-4-3Z" fill="#555"/>
<path d="M1 937 L11 951M11 937 L1 951" stroke="#7a1c1c" stroke-width="1.500"/>
<rect x="0.500" y="957.500" width="1262" height="13" rx="6" fill="url(#trk)" stroke="#c8c6c2"/>
<rect x="13.500" y="957.500" width="226" height="13" rx="6" fill="url(#btn)" stroke="#b8b6b2"/>
<path d="M9 961v6l-3-3ZM1261 961v6l3-3Z" fill="#555"/><path d="M123 961v5M126 961v5M129 961v5" stroke="#aaa"/>
<g class="u d" style="font-size:12px">
<text x="2" y="983" textLength="48" lengthAdjust="spacingAndGlyphs">Заливка:</text>
<text x="2" y="997" textLength="50" lengthAdjust="spacingAndGlyphs">Обводка:</text>
<text x="79" y="983" textLength="21" lengthAdjust="spacingAndGlyphs">Н/Д</text>
<text x="79" y="997" textLength="21" lengthAdjust="spacingAndGlyphs">Н/Д</text>
<text x="127" y="990">H:</text>
<text x="1122" y="983">X:</text><text x="1122" y="997">Y:</text>
<text x="1149" y="983" textLength="35" lengthAdjust="spacing">44,98</text><text x="1142" y="997" textLength="42" lengthAdjust="spacing">-29,32</text>
<text x="1192" y="990">Z:</text>
</g>
<rect x="141.500" y="975.500" width="35" height="21" rx="3" fill="#f2f1f0" stroke="#cfcdc9"/><text x="143" y="990" style="font-family:'Liberation Sans',sans-serif;font-size:13px" fill="#bdbbb7">30</text><path d="M163 976v20" stroke="#dcdad7"/><path d="M170 979l-3 4h6ZM170 993l-3-4h6Z" fill="#b9b7b3"/>
<path d="M180.500 975v22" stroke="#d6d4d1"/>
<path d="M187 985q6-6 12 0q-6 6-12 0Z" fill="#fff" stroke="#111"/><circle cx="193" cy="985" r="2.500" fill="#111"/><path d="M188 981l1 1M191 979v2M195 979v2M198 981l-1 1" stroke="#111"/>
<rect x="209" y="985" width="8" height="7" fill="#f0d060" stroke="#333"/><path d="M211 985v-3a2.500 2.500 0 0 1 5 0" fill="none" stroke="#333"/>
<rect x="224.500" y="973.500" width="92" height="25" rx="4" fill="url(#btn2)" stroke="#aaa8a4"/>
<text x="231" y="990" style="font-family:'Liberation Sans',sans-serif;font-size:12.500px;font-weight:bold" fill="#4c4c4c" textLength="49" lengthAdjust="spacingAndGlyphs">•Layer 1</text>
<path d="M300 983h9l-4.500 6Z" fill="#6f6d69"/>
<text x="323" y="991" class="u" fill="#4c4c4c" style="font-size:14.500px" textLength="669" lengthAdjust="spacingAndGlyphs">Нет выделенных объектов. Используйте щелчок, Shift+щелчок или обведите объекты рамкой.</text>
<path d="M1118.500 972v26" stroke="#d0cecb"/>
<rect x="1206.500" y="976.500" width="53" height="19" rx="3" fill="#fff" stroke="#b0aeaa"/><text x="1213" y="990" style="font-family:'Liberation Sans',sans-serif;font-size:13px" fill="#333" textLength="30" lengthAdjust="spacingAndGlyphs">128%</text><path d="M1246.500 977v18" stroke="#d6d4d1"/><path d="M1252 980l-3 4h6ZM1252 992l-3-4h6Z" fill="#555"/>
<g stroke="#c9c7c3"><path d="M1278 990h1M1275 993h1M1278 993h1M1272 996h1M1275 996h1M1278 996h1"/></g>

<!-- TASKBAR -->
<rect y="999" width="1280" height="25" fill="url(#tit)"/>
<rect x="476" y="999" width="221" height="25" fill="#2f2e2a"/>
<rect x="2.500" y="1001.500" width="19" height="20" rx="2" fill="#5c3b68" stroke="#7a7870"/><rect x="4" y="1003" width="16" height="4" fill="#eee"/><rect x="4" y="1008" width="5" height="5" fill="#c98fd0"/><rect x="4" y="1015" width="5" height="5" fill="#c98fd0"/><rect x="10" y="1008" width="10" height="12" fill="#a050b0"/>
<path d="M26 1010h4M26 1013h4M26 1016h4" stroke="#55534c"/>
<path d="M34.500 999v25M254.500 999v25M476.500 999v25M697.500 999v25M917.500 999v25M1115.500 999v25" stroke="#2f2e2a"/>
<use href="#opera" x="0" y="0" transform="translate(50,1012) scale(.75)"/>
<use href="#page" transform="translate(270,1012) scale(.8)"/><path d="M267 1009h6M267 1012h5M267 1015h4" stroke="#888"/><path d="M276 1006l-5 10" stroke="#222" stroke-width="2"/>
<use href="#ink" transform="translate(490,1012) scale(.85)"/>
<rect x="705" y="1004" width="16" height="16" fill="#c070d0"/><rect x="705" y="1004" width="16" height="4" fill="#eee"/><rect x="705.500" y="1004.500" width="15" height="15" fill="none" stroke="#553a60"/>
<use href="#ink" transform="translate(935,1012) scale(.85)"/>
<g class="u p">
<text x="66" y="1017" textLength="179" lengthAdjust="spacingAndGlyphs">cnc-club.ru • Просмотр т…</text>
<text x="287" y="1017" textLength="178" lengthAdjust="spacingAndGlyphs">output_0023_1.ngc (~/.о…</text>
<text x="508" y="1017" textLength="177" lengthAdjust="spacingAndGlyphs" style="fill:#fff">Новый документ 1 — In…</text>
<text x="729" y="1017" textLength="96" lengthAdjust="spacingAndGlyphs">Рабочий стол</text>
<text x="951" y="1017" textLength="146" lengthAdjust="spacingAndGlyphs">16k30.svg — Inkscape</text>
</g>
<rect x="1142" y="1002" width="27" height="20" fill="#f7a98c" stroke="#eee"/>
<use href="#ink" transform="translate(1153,1011) scale(.8)"/><rect x="1157" y="1011" width="11" height="10" fill="#ef7a4a" stroke="#fff"/>
<path d="M1196.500 1002v20M1223.500 1002v20M1169.500 1002v20M1250.500 1002v20" stroke="#2f2e2a"/>
<path d="M1259 1003h15l-2 20h-11Z" fill="#a9a79f" stroke="#6a685f"/><rect x="1258" y="1001" width="17" height="3" fill="#c9c7bf"/><path d="M1262 1007l1 13M1266.500 1007v13M1271 1007l-1 13" stroke="#77756c"/>

<!-- LATHE DIALOG -->
<path d="M660 941 V443 a8 8 0 0 1 8-8 H1223 a8 8 0 0 1 8 8 V941Z" fill="#f2f1f0" stroke="#a8a6a2"/>
<path d="M660 463 V443 a8 8 0 0 1 8-8 H1223 a8 8 0 0 1 8 8 V463Z" fill="#3e3d39"/>
<circle cx="678" cy="449" r="7.500" fill="#5e5c55"/><path d="M675.500 446.500l5 5m0-5l-5 5" stroke="#3c3b37"/>
<text x="699" y="454" class="u" style="font-size:14px;font-weight:bold" fill="#7c7a73" textLength="40" lengthAdjust="spacingAndGlyphs">Lathe</text>
<rect x="668.500" y="500.500" width="553" height="342" rx="3" fill="#f5f5f5" stroke="#bcbab5"/>
<g fill="#e0dedb" stroke="#bcbab5"><path d="M719.500 500V478a3 3 0 0 1 3-3H851a3 3 0 0 1 3 3V500Z"/><path d="M856.500 500V478a3 3 0 0 1 3-3H958a3 3 0 0 1 3 3V500Z"/><path d="M963.500 500V478a3 3 0 0 1 3-3H1053a3 3 0 0 1 3 3V500Z"/><path d="M1058.500 500V478a3 3 0 0 1 3-3H1147a3 3 0 0 1 3 3V500Z"/><path d="M1152.500 500V478a3 3 0 0 1 3-3H1219a3 3 0 0 1 3 3V500Z"/></g>
<path d="M668.500 501V476a3 3 0 0 1 3-3H714a3 3 0 0 1 3 3V501Z" fill="#f5f5f5" stroke="#bcbab5"/><rect x="669" y="500" width="47.500" height="3" fill="#f5f5f5"/>
<g class="u" fill="#4c4c4c">
<text x="674" y="493" textLength="38" lengthAdjust="spacingAndGlyphs">Lathe</text>
<g fill="#6a6864"><text x="725" y="494" textLength="123" lengthAdjust="spacingAndGlyphs">Lathe modify path</text>
<text x="861" y="494" textLength="95" lengthAdjust="spacingAndGlyphs">Path to Gcode</text>
<text x="969" y="494" textLength="81" lengthAdjust="spacingAndGlyphs">Параметры</text>
<text x="1063" y="494" textLength="80" lengthAdjust="spacingAndGlyphs">Preferences</text>
<text x="1157" y="494" textLength="59" lengthAdjust="spacingAndGlyphs">Справка</text></g>
<text x="675" y="539" textLength="83" lengthAdjust="spacingAndGlyphs">Lathe width:</text>
<text x="675" y="593" textLength="97" lengthAdjust="spacingAndGlyphs">Fine cut width:</text>
<text x="675" y="647" textLength="97" lengthAdjust="spacingAndGlyphs">Fine cut count:</text>
<text x="675" y="685" textLength="141" lengthAdjust="spacingAndGlyphs">Create fine cut using:</text>
<text x="675" y="759" textLength="131" lengthAdjust="spacingAndGlyphs">Lathe X axis remap:</text>
<text x="675" y="814" textLength="130" lengthAdjust="spacingAndGlyphs">Lathe Z axis remap:</text>
<text x="668" y="885" textLength="106" lengthAdjust="spacingAndGlyphs">Предпросмотр</text>
</g>
<g fill="#fff" stroke="#b0aeaa"><rect x="1107.500" y="522.500" width="106" height="24" rx="3"/><rect x="1107.500" y="576.500" width="106" height="24" rx="3"/><rect x="1155.500" y="630.500" width="58" height="24" rx="3"/><rect x="811.500" y="741.500" width="402" height="25" rx="3"/><rect x="810.500" y="796.500" width="403" height="25" rx="3"/></g>
<g fill="#efeeec"><rect x="1198" y="523" width="15" height="23"/><rect x="1198" y="577" width="15" height="23"/><rect x="1198" y="631" width="15" height="23"/></g>
<path d="M1197.500 523v23M1197.500 577v23M1197.500 631v23" stroke="#d0cecb"/>
<g fill="#6f6d69"><path d="M1205.500 528l-2.500 3h5ZM1205.500 541l-2.500-3h5ZM1205.500 582l-2.500 3h5ZM1205.500 595l-2.500-3h5ZM1205.500 636l-2.500 3h5ZM1205.500 649l-2.500-3h5Z"/></g>
<g class="u" fill="#3c3c3c">
<text x="1111" y="539" textLength="60" lengthAdjust="spacingAndGlyphs">20,00000</text>
<text x="1111" y="593" textLength="52" lengthAdjust="spacingAndGlyphs">1,00000</text>
<text x="1159" y="647">3</text>
<text x="815" y="759">X</text>
<text x="814" y="814">Z</text>
</g>
<rect x="1044.500" y="672.500" width="169" height="28" rx="4" fill="url(#btn)" stroke="#b0aeaa"/>
<text x="1050" y="692" class="u" fill="#4c4c4c" textLength="71" lengthAdjust="spacingAndGlyphs">Move path</text>
<path d="M1198 686h8l-4 5Z" fill="#6f6d69"/>
<path d="M662 856.500H1228M662 898.500H1228" stroke="#dcdad7"/>
<rect x="1203.500" y="873.500" width="13" height="13" rx="3" fill="#fff" stroke="#a8a6a2"/>
<rect x="1018.500" y="906.500" width="97" height="26" rx="4" fill="url(#btn2)" stroke="#a8a6a2"/>
<rect x="1124.500" y="906.500" width="97" height="26" rx="4" fill="url(#org)" stroke="#c6825f"/>
<text x="1037" y="925" class="u" fill="#4c4c4c" textLength="59" lengthAdjust="spacingAndGlyphs">Закрыть</text>
<text x="1133" y="925" class="u" fill="#4c4c4c" textLength="80" lengthAdjust="spacingAndGlyphs">Применить</text>
</svg>
</body></html>
